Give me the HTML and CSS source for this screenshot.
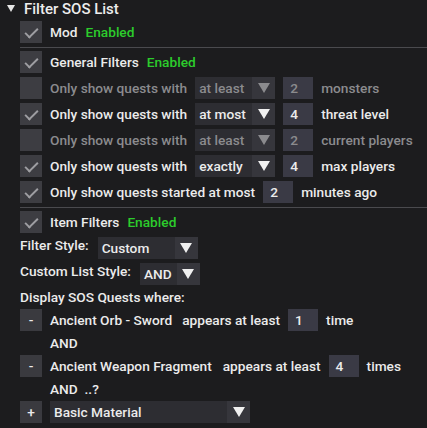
FILE: index.html
```html
<!DOCTYPE html>
<html>
<head>
<meta charset="utf-8">
<link rel="stylesheet" href="styles.css">
</head>
<body>
<div class="panel">
  <div class="header"><span class="tri"></span><span class="title">Filter SOS List</span></div>
  <div class="body">
    <div class="row"><span class="cb on"></span><span class="lbl">Mod</span><span class="green">Enabled</span></div>
    <div class="sep"></div>
    <div class="row"><span class="cb on"></span><span class="lbl">General Filters</span><span class="green">Enabled</span></div>
    <div class="row dis"><span class="cb"></span><span class="lbl">Only show quests with</span><span class="dd w80"><span class="ddt">at least</span><span class="dda"><i></i></span></span><span class="num">2</span><span class="lbl">monsters</span></div>
    <div class="row"><span class="cb on"></span><span class="lbl">Only show quests with</span><span class="dd w80"><span class="ddt">at most</span><span class="dda"><i></i></span></span><span class="num">4</span><span class="lbl">threat level</span></div>
    <div class="row dis"><span class="cb"></span><span class="lbl">Only show quests with</span><span class="dd w80"><span class="ddt">at least</span><span class="dda"><i></i></span></span><span class="num">2</span><span class="lbl">current players</span></div>
    <div class="row"><span class="cb on"></span><span class="lbl">Only show quests with</span><span class="dd w80"><span class="ddt">exactly</span><span class="dda"><i></i></span></span><span class="num">4</span><span class="lbl">max players</span></div>
    <div class="row"><span class="cb on"></span><span class="lbl">Only show quests started at most</span><span class="num">2</span><span class="lbl">minutes ago</span></div>
    <div class="sep"></div>
    <div class="row"><span class="cb on"></span><span class="lbl">Item Filters</span><span class="green">Enabled</span></div>
    <div class="row top"><span class="txt">Filter Style:</span><span class="dd w100"><span class="ddt">Custom</span><span class="dda"><i></i></span></span></div>
    <div class="row top"><span class="txt">Custom List Style:</span><span class="dd w60"><span class="ddt">AND</span><span class="dda"><i></i></span></span></div>
    <div class="trow">Display SOS Quests where:</div>
    <div class="row"><span class="btn">-</span><span class="lbl">Ancient Orb - Sword</span><span class="lbl sp">appears at least</span><span class="num">1</span><span class="lbl">time</span></div>
    <div class="trow ind">AND</div>
    <div class="row"><span class="btn">-</span><span class="lbl wide">Ancient Weapon Fragment</span><span class="lbl">appears at least</span><span class="num">4</span><span class="lbl">times</span></div>
    <div class="trow ind">AND&nbsp;&nbsp;..?</div>
    <div class="row"><span class="btn">+</span><span class="dd w200"><span class="ddt">Basic Material</span><span class="dda"><i></i></span></span></div>
  </div>
</div>
</body>
</html>
```
FILE: styles.css
```css
* { box-sizing: border-box; }
html, body { margin: 0; padding: 0; }
body {
  background: #1c1c1e;
  color: #ebebeb;
  font-family: "Roboto", "Inter", sans-serif;
  font-size: 13.7px;
  font-weight: 500;
  width: 427px;
  height: 428px;
  overflow: hidden;
}
.panel { display: flex; flex-direction: column; gap: 4px; }
.header { height: 17px; display: flex; align-items: center; padding-left: 7px; gap: 9px; }
.tri { width: 0; height: 0; border-left: 4px solid transparent; border-right: 4px solid transparent; border-top: 7px solid #e6e6e6; }
.title { font-size: 15px; color: #ededed; }
.body { display: flex; flex-direction: column; gap: 4px; padding-left: 20px; }
.row { height: 22px; display: flex; align-items: center; }
.row.top { align-items: flex-start; }
.txt { line-height: 16px; margin-right: 9px; }
.trow { height: 16px; line-height: 16px; }
.trow.ind { padding-left: 30px; }
.sep { height: 1px; background: #4a4a4e; margin-bottom: -1px; }
.cb { width: 22px; height: 22px; background: #3d3d42; margin-right: 8px; flex: none; position: relative; }
.cb.on::after {
  content: ""; position: absolute; left: 5px; top: 3px; width: 11px; height: 5px;
  border-left: 2.5px solid #9e9ea2; border-bottom: 2.5px solid #9e9ea2;
  transform: translate(0, 4px) rotate(-45deg); transform-origin: center;
}
.lbl { margin-right: 8px; white-space: nowrap; }
.lbl.sp { margin-left: 2px; }
.lbl.wide { margin-right: 11px; }
.green { color: #2ccc2c; }
.dis .lbl, .dis .ddt, .dis .num { color: #8b8b8e; }
.dis .dda i { border-top-color: #8b8b8e; }
.dd { height: 22px; display: flex; background: #2d2d32; margin-right: 8px; flex: none; }
.w80 { width: 80px; }
.w100 { width: 100px; }
.w60 { width: 60px; }
.w200 { width: 200px; }
.ddt { flex: 1; padding-left: 4px; line-height: 22px; white-space: nowrap; overflow: hidden; }
.dda { width: 23px; background: #36363c; display: flex; align-items: center; justify-content: center; }
.dda i { display: block; width: 0; height: 0; border-left: 6px solid transparent; border-right: 6px solid transparent; border-top: 10px solid #f0f0f0; }
.num { width: 30px; height: 22px; background: #3a3a45; padding-left: 7px; line-height: 22px; margin-right: 8px; flex: none; }
.btn { width: 22px; height: 22px; background: #3a3a3f; margin-right: 8px; text-align: center; line-height: 22px; flex: none; }
```
